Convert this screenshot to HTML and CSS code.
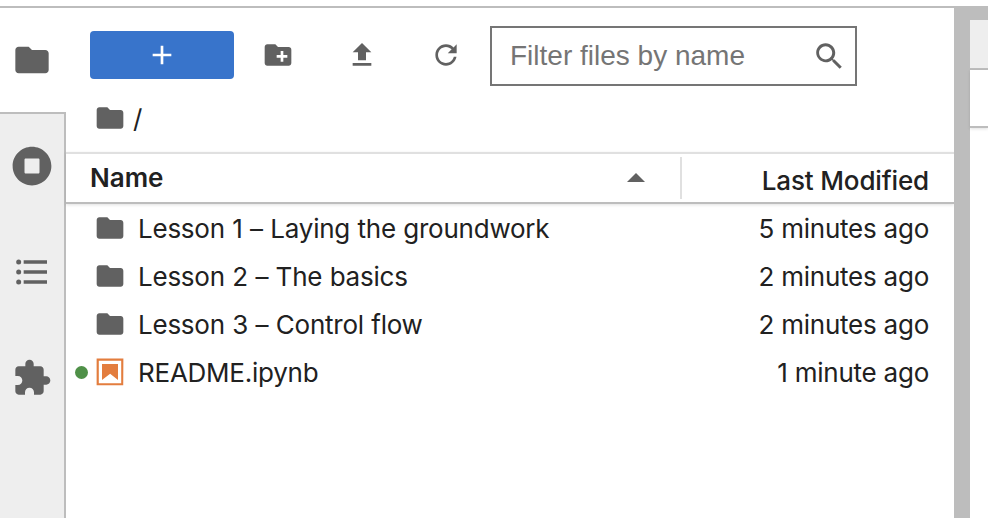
FILE: index.html
```html
<!DOCTYPE html>
<html lang="en">
<head>
<meta charset="utf-8">
<title>File Browser</title>
<link rel="stylesheet" href="styles.css">
</head>
<body>
<svg class="defs" aria-hidden="true">
  <symbol id="folder" viewBox="0 0 24 24"><path d="M10 4H4c-1.1 0-1.99.9-1.99 2L2 18c0 1.1.9 2 2 2h16c1.1 0 2-.9 2-2V8c0-1.1-.9-2-2-2h-8l-2-2z"/></symbol>
</svg>
<div class="app">
  <nav class="sidebar">
    <div class="tab active"><svg class="icon-lg"><use href="#folder"/></svg></div>
    <div class="tabs">
      <div class="tab"><svg class="icon-lg" viewBox="0 0 512 512"><path d="M256 8C119 8 8 119 8 256s111 248 248 248 248-111 248-248S393 8 256 8zm96 328c0 8.800-7.200 16-16 16H176c-8.800 0-16-7.200-16-16V176c0-8.800 7.200-16 16-16h160c8.800 0 16 7.200 16 16v160z"/></svg></div>
      <div class="tab"><svg class="icon-lg" viewBox="0 0 24 24"><path d="M7 5h14v2H7zM7 11h14v2H7zM7 17h14v2H7z"/><circle cx="4" cy="6" r="1.5"/><circle cx="4" cy="12" r="1.5"/><circle cx="4" cy="18" r="1.5"/></svg></div>
      <div class="tab"><svg class="icon-lg" viewBox="0 0 24 24"><path d="M20.5 11H19V7c0-1.100-.9-2-2-2h-4V3.500C13 2.120 11.880 1 10.500 1S8 2.120 8 3.500V5H4c-1.100 0-1.990.9-1.990 2v3.800H3.500c1.490 0 2.700 1.210 2.700 2.700s-1.210 2.700-2.700 2.700H2V20c0 1.100.9 2 2 2h3.800v-1.500c0-1.490 1.210-2.700 2.700-2.700 1.490 0 2.700 1.210 2.700 2.700V22H17c1.100 0 2-.9 2-2v-4h1.500c1.380 0 2.500-1.120 2.500-2.500S21.880 11 20.500 11z"/></svg></div>
    </div>
  </nav>
  <main class="browser">
    <div class="toolbar">
      <button class="new" aria-label="New"><svg class="icon" viewBox="0 0 24 24"><path d="M19 13h-6v6h-2v-6H5v-2h6V5h2v6h6v2z"/></svg></button>
      <div class="actions">
        <svg class="icon" viewBox="0 0 24 24"><path d="M20 6h-8l-2-2H4c-1.110 0-1.990.89-1.990 2L2 18c0 1.110.89 2 2 2h16c1.110 0 2-.89 2-2V8c0-1.110-.89-2-2-2zm-1 8h-3v3h-2v-3h-3v-2h3V9h2v3h3v2z"/></svg>
        <svg class="icon" viewBox="0 0 24 24"><path d="M9 16h6v-6h4l-7-7-7 7h4zm-4 2h14v2H5z"/></svg>
        <svg class="icon" viewBox="0 0 18 18"><path d="M9 13.500c-2.490 0-4.500-2.010-4.500-4.500S6.510 4.500 9 4.500c1.240 0 2.360.52 3.170 1.330L10 8h5V3l-1.760 1.760C12.150 3.680 10.660 3 9 3 5.690 3 3.010 5.690 3.010 9S5.690 15 9 15c2.970 0 5.430-2.160 5.900-5h-1.520c-.46 2-2.240 3.500-4.380 3.500z"/></svg>
      </div>
      <div class="filter">
        <span class="placeholder">Filter files by name</span>
        <svg class="icon" viewBox="0 0 18 18"><path d="M12.1,10.9h-0.7l-0.2-0.2c0.8-0.9,1.3-2.2,1.3-3.5c0-3-2.4-5.4-5.4-5.4S1.8,4.2,1.8,7.1s2.4,5.4,5.4,5.4 c1.3,0,2.5-0.5,3.5-1.3l0.2,0.2v0.7l4.1,4.1l1.2-1.2L12.1,10.9z M7.1,10.9c-2.1,0-3.7-1.7-3.7-3.7s1.7-3.7,3.7-3.7s3.7,1.7,3.7,3.7 S9.2,10.9,7.1,10.9z"/></svg>
      </div>
    </div>
    <div class="crumbs"><svg class="icon"><use href="#folder"/></svg><span class="root">/</span></div>
    <div class="header">
      <div class="col-name"><span>Name</span><svg class="caret" viewBox="0 0 18 9"><path d="M0 9L9 0l9 9z"/></svg></div>
      <div class="col-modified">Last Modified</div>
    </div>
    <div class="list">
      <div class="row"><span class="dot-slot"></span><svg class="icon"><use href="#folder"/></svg><span class="file">Lesson 1 – Laying the groundwork</span><span class="time">5 minutes ago</span></div>
      <div class="row"><span class="dot-slot"></span><svg class="icon"><use href="#folder"/></svg><span class="file">Lesson 2 – The basics</span><span class="time">2 minutes ago</span></div>
      <div class="row"><span class="dot-slot"></span><svg class="icon"><use href="#folder"/></svg><span class="file">Lesson 3 – Control flow</span><span class="time">2 minutes ago</span></div>
      <div class="row"><span class="dot-slot"><span class="dot"></span></span><svg class="icon notebook" viewBox="0 0 22 22"><path d="M18.7 3.300v15.400H3.300V3.300h15.400m1.500-1.500H1.800v18.300h18.300l.1-18.300z"/><path d="M16.500 16.500l-5.400-4.300-5.600 4.300v-11h11z"/></svg><span class="file">README.ipynb</span><span class="time">1 minute ago</span></div>
    </div>
  </main>
  <div class="splitter"></div>
  <section class="dock"><div class="dock-tabs"></div><div class="dock-toolbar"></div></section>
</div>
</body>
</html>
```

FILE: styles.css
```css
* { box-sizing: border-box; }
body {
  margin: 0;
  background: #fff;
  color: #212121;
  font: 26px/48px Inter, "Liberation Sans", sans-serif;
  overflow: hidden;
}
svg { display: block; fill: #616161; flex: none; }
.defs { position: absolute; width: 0; height: 0; }
.icon { width: 32px; height: 32px; }
.icon-lg { width: 40px; height: 40px; }

.app { display: flex; height: 512px; margin-top: 6px; border-top: 2px solid #bdbdbd; }

.sidebar { width: 66px; display: flex; flex-direction: column; }
.tab { height: 106px; padding-left: 12px; display: flex; align-items: center; }
.tab.active { height: 104px; }
.tabs { flex: 1; background: #eee; border: solid #bdbdbd; border-width: 2px 2px 0 0; }
.tabs .tab:first-child { margin-top: -1px; }

.browser { width: 888px; display: flex; flex-direction: column; }
.toolbar { height: 94px; display: flex; align-items: center; padding-left: 24px; }
.new {
  width: 144px; height: 48px; padding: 0; border: 0; border-radius: 4px;
  background: #3874cb; display: flex; align-items: center; justify-content: center;
}
.new svg { fill: #fff; }
.actions { display: flex; gap: 52px; margin-left: 28px; }
.filter {
  width: 367px; height: 60px; margin: 2px 0 0 28px; padding: 0 10px 0 18px;
  border: 2px solid #757575; color: #757575;
  font-family: "Liberation Sans", Arial, sans-serif; font-size: 28px;
  display: flex; align-items: center; justify-content: space-between;
}
.filter .icon { margin-bottom: 1px; }
.crumbs { height: 50px; display: flex; padding-left: 28px; line-height: 34px; }
.root { margin-left: 7px; }

.header {
  height: 52px; display: flex; border-top: 2px solid #e0e0e0; border-bottom: 2px solid #bdbdbd;
  box-shadow: 0 1px 3px rgba(0, 0, 0, .12);
}
.col-name {
  width: 616px; height: 42px; margin-top: 3px; padding: 0 35px 0 24px; border-right: 2px solid #e0e0e0;
  display: flex; align-items: center; justify-content: space-between; font-weight: 600;
}
.caret { width: 18px; height: 9px; margin-bottom: 2px; }
.col-modified { flex: 1; padding-right: 25px; text-align: right; font-weight: 500; line-height: 54px; letter-spacing: -.15px; }

.list { padding-top: 1px; letter-spacing: -.24px; }
.row { height: 48px; display: flex; align-items: center; padding-right: 25px; }
.row .icon { margin-top: -2px; }
.dot-slot { width: 28px; padding-left: 9px; }
.dot { display: block; width: 13px; height: 13px; margin-top: -2px; border-radius: 50%; background: #4f9048; }
.notebook { fill: #e37d3e; }
.file { flex: 1; padding-left: 12px; word-spacing: .4px; }

.splitter { width: 16px; background: #bdbdbd; }
.dock { flex: 1; border-top: 12px solid #bdbdbd; }
.dock-tabs { height: 50px; background: #eee; border-bottom: 2px solid #bdbdbd; }
.dock-toolbar { height: 58px; border-bottom: 2px solid #bdbdbd; box-shadow: 0 1px 3px rgba(0, 0, 0, .12); }
```
